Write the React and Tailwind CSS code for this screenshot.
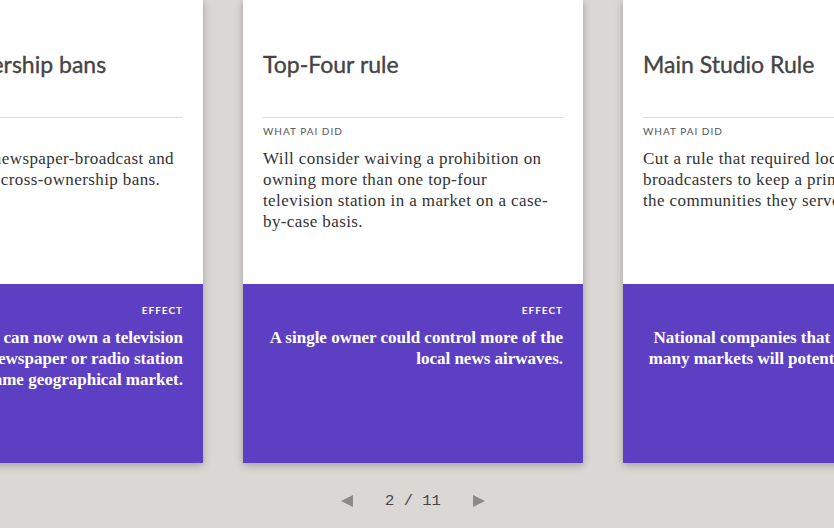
const cards = [
  {
    title: "Cross-ownership bans",
    did: ["Eliminated the newspaper-broadcast and", "radio-television cross-ownership bans."],
    effect: ["A company can now own a television", "station and a newspaper or radio station", "in the same geographical market."],
  },
  {
    title: "Top-Four rule",
    did: ["Will consider waiving a prohibition on", "owning more than one top-four", "television station in a market on a case-", "by-case basis."],
    effect: ["A single owner could control more of the", "local news airwaves."],
  },
  {
    title: "Main Studio Rule",
    did: ["Cut a rule that required local", "broadcasters to keep a primary studio in", "the communities they serve."],
    effect: ["National companies that own stations in", "many markets will potentially close local", "studios."],
  },
];

function Card({ card }) {
  return (
    <div className="w-[340px] shrink-0 h-[463px] flex flex-col shadow-[0_2px_8px_rgba(0,0,0,0.28)]">
      {/* TOP: title + what pai did */}
      <div className="bg-white h-[284px] px-5 pt-[50px]">
        <h2 className="font-['Lato',sans-serif] text-[23px] leading-[28px] text-[#444] [-webkit-text-stroke:0.35px_#444] whitespace-nowrap">
          {card.title}
        </h2>
        <div className="mt-[39px] border-t border-[#dcdcdc]" />
        <p className="mt-[6px] font-['Lato',sans-serif] text-[10px] leading-[14px] tracking-[0.1em] text-[#555]">
          WHAT PAI DID
        </p>
        <p className="mt-[10px] font-['Liberation_Serif',serif] text-[17px] leading-[21px] tracking-[0.4px] text-[#333] whitespace-nowrap">
          {card.did.map((line, i) => (
            <span key={i} className="block">
              {line}
            </span>
          ))}
        </p>
      </div>

      {/* BOTTOM: effect */}
      <div className="flex-1 bg-[#5d3fc4] px-5 pt-[19px] text-right text-white">
        <p className="font-['Lato',sans-serif] font-bold text-[10px] leading-[14px] tracking-[0.1em]">
          EFFECT
        </p>
        <p className="mt-[10px] font-['Liberation_Serif',serif] font-bold text-[17px] leading-[21px] whitespace-nowrap">
          {card.effect.map((line, i) => (
            <span key={i} className="block">
              {line}
            </span>
          ))}
        </p>
      </div>
    </div>
  );
}

export default function App() {
  return (
    <div className="w-[834px] h-[528px] bg-[#dbd7d4] overflow-hidden">
      <div className="flex gap-10 ml-[-137px]">
        {cards.map((card, i) => (
          <Card key={i} card={card} />
        ))}
      </div>

      {/* PAGINATION */}
      <div className="mt-[26px] pr-2 flex items-center justify-center gap-8 h-6">
        <svg width="12" height="12" viewBox="0 0 12 12">
          <polygon points="12,0 12,12 0,6" fill="#8a8a8a" />
        </svg>
        <span className="font-['Liberation_Mono',monospace] text-[15.5px] leading-6 text-[#444]">
          2 / 11
        </span>
        <svg width="12" height="12" viewBox="0 0 12 12">
          <polygon points="0,0 0,12 12,6" fill="#8a8a8a" />
        </svg>
      </div>
    </div>
  );
}
